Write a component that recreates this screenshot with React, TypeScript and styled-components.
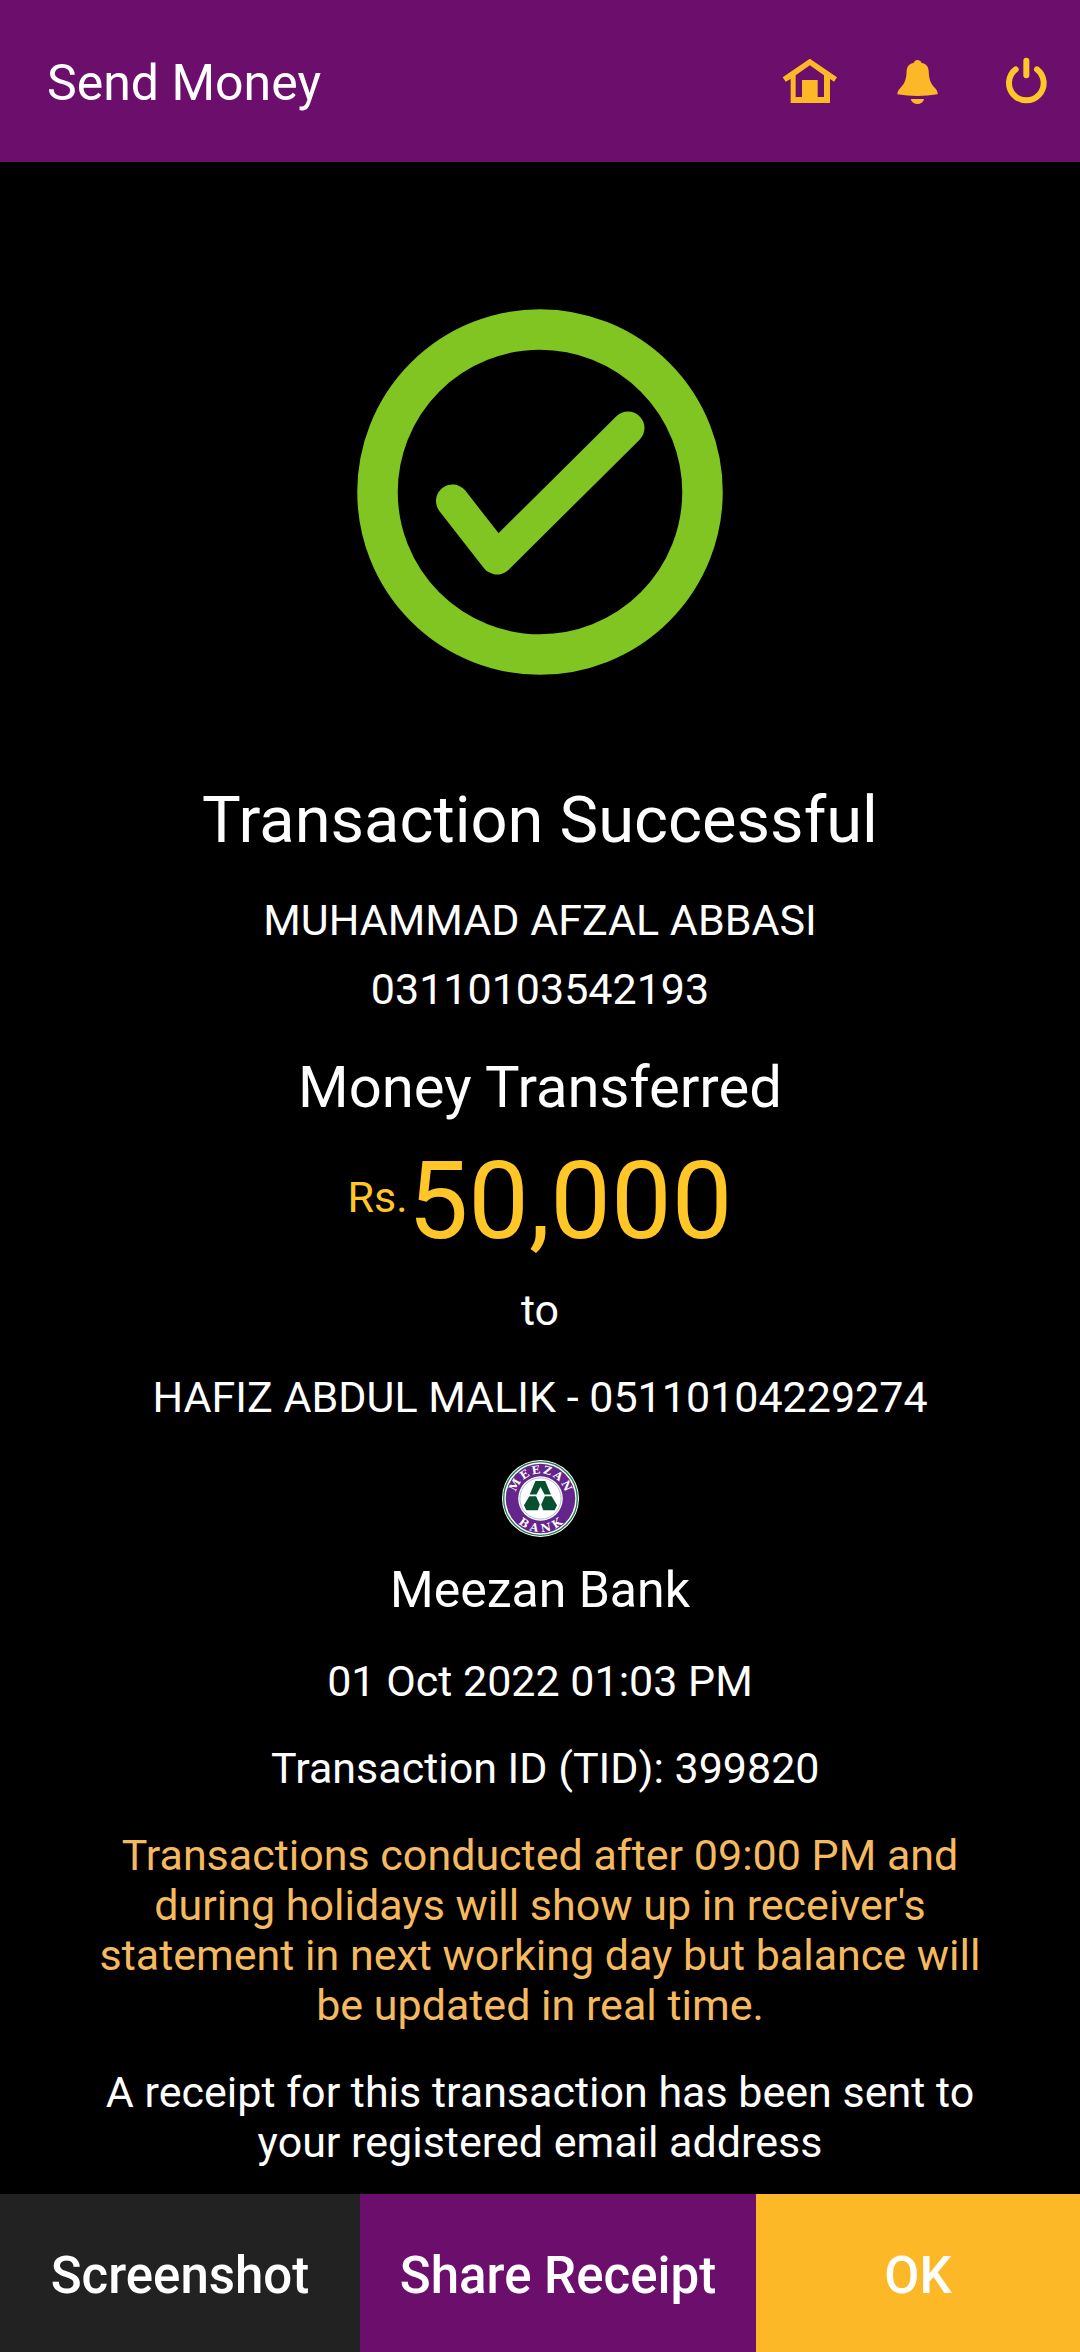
import React from "react";
import styled, { createGlobalStyle } from "styled-components";

const color = {
  purple: "#6c0f6c",
  amber: "#fdb827",
  gold: "#ffc627",
  note: "#f5b95f",
  green: "#80c522",
  dark: "#222222",
};

const GlobalStyle = createGlobalStyle`
  * { box-sizing: border-box; }
  body {
    margin: 0;
    background: #000;
    color: #fff;
    font-family: Roboto, "Noto Sans", sans-serif;
  }
  button { font-family: inherit; }
`;

const Page = styled.div`
  min-height: 100vh;
  display: flex;
  flex-direction: column;
`;

const Header = styled.header`
  display: flex;
  align-items: center;
  justify-content: space-between;
  height: 162px;
  padding-left: 47px;
  background: ${color.purple};
`;

const HeaderTitle = styled.h1`
  margin: 0;
  padding-top: 4px;
  font-size: 50px;
  line-height: 58px;
  font-weight: 400;
`;

const HeaderActions = styled.nav`
  display: flex;
  align-self: stretch;
`;

const IconButton = styled.button`
  width: 108px;
  padding: 0;
  border: 0;
  background: transparent;
  color: ${color.amber};
  display: flex;
  align-items: center;
  justify-content: center;
  cursor: pointer;

  svg {
    width: 60px;
    height: 60px;
  }
`;

const Receipt = styled.main`
  flex: 1;
  display: flex;
  flex-direction: column;
  align-items: center;
  padding: 147px 90px 22px;
  text-align: center;
`;

const StatusIcon = styled.svg`
  width: 366px;
  height: 366px;
`;

const Title = styled.h2`
  margin: 107px 0 0;
  font-size: 65px;
  line-height: 76px;
  font-weight: 400;
`;

const Subtitle = styled.h3`
  margin: 38px 0 0;
  font-size: 58px;
  line-height: 70px;
  font-weight: 400;
`;

const Line = styled.p<{ $gap?: number; $tone?: string }>`
  margin: ${(p) => p.$gap ?? 37}px 0 0;
  color: ${(p) => p.$tone ?? "#fff"};
  font-size: 43px;
  line-height: 50px;
`;

const Amount = styled.p`
  display: flex;
  align-items: center;
  margin: 16px 0 0;
  color: ${color.gold};
  font-size: 108px;
  line-height: 126px;
`;

const Currency = styled.span`
  padding-bottom: 8px;
  font-size: 43px;
  line-height: 50px;
`;

const BankLogo = styled.svg`
  width: 77px;
  height: 77px;
  margin-top: 38px;
`;

const BankName = styled.p`
  margin: 24px 0 0;
  font-size: 50px;
  line-height: 58px;
`;

const Footer = styled.footer`
  display: grid;
  grid-template-columns: 10fr 11fr 9fr;
  height: 158px;
`;

const FooterButton = styled.button<{ $fill: string }>`
  border: 0;
  padding: 6px 0 0;
  background: ${(p) => p.$fill};
  color: #fff;
  font-size: 51px;
  line-height: 58px;
  font-weight: 500;
  cursor: pointer;
`;

const HomeIcon = () => (
  <svg viewBox="60 63 180 180" aria-hidden="true">
    <path
      fill="currentColor"
      fillRule="evenodd"
      d="M149.500 86L231 142L222 155L210 147V219H92V147L77 155L68 142ZM149.500 106L107 136V201H126V150H173V201H192V136Z"
    />
  </svg>
);

const BellIcon = () => (
  <svg viewBox="384 63 180 180" aria-hidden="true">
    <path
      fill="currentColor"
      d="M462 98C463 87 482 87 484 98C498 101 505 109 506 122C507 150 512 160 525 174C531 181 533 185 533 193Q472 203 412 193C412 185 415 181 421 174C434 160 439 149 440 122C441 109 448 101 462 98Z"
    />
    <path fill="currentColor" d="M452 207H492C488 227 457 227 452 207Z" />
  </svg>
);

const PowerIcon = () => (
  <svg viewBox="708 63 180 180" aria-hidden="true">
    <g fill="none" stroke={color.gold} strokeWidth="18" strokeLinecap="round">
      <path d="M799 92V136" />
      <path d="M767 118A52 52 0 1 0 831 118" />
    </g>
  </svg>
);

const MeezanLogo = () => (
  <BankLogo viewBox="38 31 228 228" role="img" aria-label="Meezan Bank logo">
    <defs>
      <path id="arc-top" d="M80 167A75 75 0 1 1 224 167" />
      <path id="arc-bottom" d="M53 145A99 99 0 0 0 251 145" />
    </defs>
    <circle cx="152" cy="145" r="114" fill="#fff" />
    <circle cx="152" cy="145" r="109" fill="none" stroke="#1f7a4d" strokeWidth="4" />
    <circle cx="152" cy="145" r="103" fill="#64258c" />
    <circle cx="152" cy="145" r="66" fill="#fff" />
    <circle cx="152" cy="145" r="61" fill="none" stroke="#8f9fb5" strokeWidth="2" />
    <g fill="#fff" fontFamily="'DejaVu Serif', serif" fontWeight="700" textAnchor="middle">
      <text fontSize="33" dx="0 6 6 6 6 6">
        <textPath href="#arc-top" startOffset="50%">MEEZAN</textPath>
      </text>
      <text fontSize="33" dx="0 11 11 11">
        <textPath href="#arc-bottom" startOffset="50%">BANK</textPath>
      </text>
    </g>
    <g fill="#06502f">
      <path d="M137 93H166L183 133H164L152 111L140 133H120Z" />
      <path d="M119 138H139L150 163L144 180H110L103 165Z" />
      <path d="M185 138H165L154 163L160 180H194L201 165Z" />
    </g>
  </BankLogo>
);

export default function App() {
  return (
    <>
      <GlobalStyle />
      <Page>
        <Header>
          <HeaderTitle>Send Money</HeaderTitle>
          <HeaderActions>
            <IconButton aria-label="Home">
              <HomeIcon />
            </IconButton>
            <IconButton aria-label="Notifications">
              <BellIcon />
            </IconButton>
            <IconButton aria-label="Log out">
              <PowerIcon />
            </IconButton>
          </HeaderActions>
        </Header>

        <Receipt>
          <StatusIcon viewBox="0 0 366 366" role="img" aria-label="Success">
            <g fill="none" stroke={color.green}>
              <circle cx="183" cy="183" r="162.500" strokeWidth="40.500" />
              <path
                d="M95.500 192L140 249L271 119"
                strokeWidth="33"
                strokeLinecap="round"
                strokeLinejoin="round"
              />
            </g>
          </StatusIcon>

          <Title>Transaction Successful</Title>
          <Line>MUHAMMAD AFZAL ABBASI</Line>
          <Line $gap={19}>03110103542193</Line>

          <Subtitle>Money Transferred</Subtitle>
          <Amount>
            <Currency>Rs.</Currency>50,000
          </Amount>
          <Line $gap={21}>to</Line>
          <Line>HAFIZ ABDUL MALIK - 05110104229274</Line>

          <MeezanLogo />
          <BankName>Meezan Bank</BankName>
          <Line>01 Oct 2022 01:03 PM</Line>
          <Line>&nbsp;Transaction ID (TID): 399820</Line>
          <Line $tone={color.note}>
            Transactions conducted after 09:00 PM and during holidays will show
            up in receiver's statement in next working day but balance will be
            updated in real time.
          </Line>
          <Line>
            A receipt for this transaction has been sent to your registered
            email address
          </Line>
        </Receipt>

        <Footer>
          <FooterButton $fill={color.dark}>Screenshot</FooterButton>
          <FooterButton $fill={color.purple}>Share Receipt</FooterButton>
          <FooterButton $fill={color.amber}>OK</FooterButton>
        </Footer>
      </Page>
    </>
  );
}
